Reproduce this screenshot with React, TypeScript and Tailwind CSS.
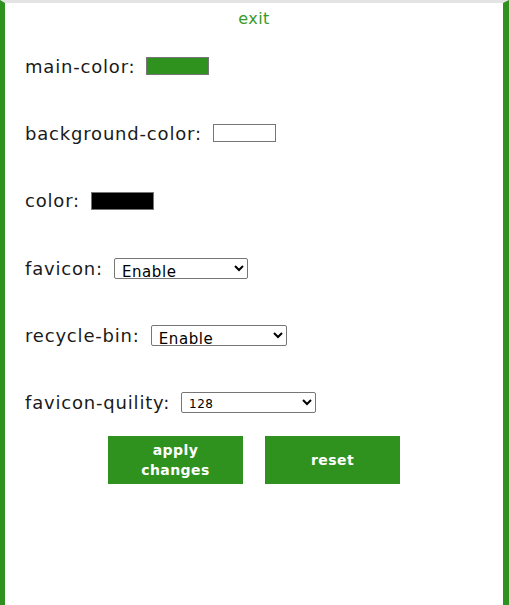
import { useState } from "react";

const GREEN = "bg-[#2f911e]";

function Swatch({ fill }: { fill: string }) {
  return <div className={`h-[18px] w-[63px] border border-[#767676] ${fill}`} />;
}

function Picker({
  value,
  options,
  width,
  size,
}: {
  value: string;
  options: string[];
  width: string;
  size: string;
}) {
  const [v, setV] = useState(value);
  return (
    <select
      value={v}
      onChange={(e) => setV(e.target.value)}
      className={`h-[21px] ${width} ${size} border border-[#767676] rounded-[2px] bg-white pl-[3px] pt-[3px] leading-none tracking-[0.04em] text-black`}
    >
      {options.map((o) => (
        <option key={o}>{o}</option>
      ))}
    </select>
  );
}

export default function App() {
  return (
    <div className="min-h-[605px] bg-white border-t-[3px] border-t-[#e4e4e4] border-l-[5px] border-r-[6px] border-l-[#2f911e] border-r-[#2f911e] font-['DejaVu_Sans',sans-serif] text-[#1a1a1a]">
      <div className="pt-[4px] text-center">
        <a className="text-[16px] leading-6 tracking-[0.03em] text-[#3a9a2a] cursor-pointer">exit</a>
      </div>

      <div className="mt-[25px] flex flex-col gap-[47.4px] px-[20px] text-[18px] tracking-[0.045em]">
        <div className="flex h-5 items-center gap-[11px]">
          <span>main-color:</span>
          <Swatch fill={GREEN} />
        </div>
        <div className="flex h-5 items-center gap-[11px]">
          <span>background-color:</span>
          <Swatch fill="bg-white" />
        </div>
        <div className="flex h-5 items-center gap-[11px]">
          <span>color:</span>
          <Swatch fill="bg-black" />
        </div>
        <div className="flex h-5 items-center gap-[11px]">
          <span>favicon:</span>
          <Picker value="Enable" options={["Enable", "Disable"]} width="w-[134px]" size="text-[15px]" />
        </div>
        <div className="flex h-5 items-center gap-[11px]">
          <span>recycle-bin:</span>
          <Picker value="Enable" options={["Enable", "Disable"]} width="w-[136px]" size="text-[15px]" />
        </div>
        <div className="flex h-5 items-center gap-[11px]">
          <span>favicon-quility:</span>
          <Picker value="128" options={["16", "32", "64", "128", "256"]} width="w-[135px]" size="text-[12px]" />
        </div>
      </div>

      <div className="mt-[23px] flex justify-center gap-[22px]">
        <button className={`h-[48px] w-[135px] ${GREEN} px-6 text-[14px] font-bold leading-5 tracking-[0.03em] text-white`}>
          apply changes
        </button>
        <button className={`h-[48px] w-[135px] ${GREEN} text-[14px] font-bold leading-5 tracking-[0.03em] text-white`}>
          reset
        </button>
      </div>
    </div>
  );
}
